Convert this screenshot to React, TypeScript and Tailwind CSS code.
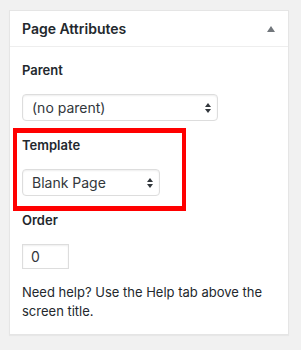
import React from "react";

const font = { fontFamily: "Inter, 'Liberation Sans', Arial, sans-serif" };

function Arrows() {
  return (
    <svg width="6" height="10" viewBox="0 0 6 10" className="shrink-0">
      <polygon points="3,0 6,4 0,4" fill="#32373c" />
      <polygon points="0,6 6,6 3,10" fill="#32373c" />
    </svg>
  );
}

function Select({ label, w }: { label: string; w: string }) {
  return (
    <div
      className={`${w} h-[27px] flex items-center justify-between pl-[9px] pr-[6px] border border-[#dddddd] rounded-[4px] bg-white shadow-[inset_0_1px_2px_rgba(0,0,0,0.07)] text-[14px] text-[#32373c]`}
    >
      <span>{label}</span>
      <Arrows />
    </div>
  );
}

export default function App() {
  return (
    <div className="min-h-[350px] w-[301px] bg-[#f1f1f1] pt-[10px] pl-[9px]" style={font}>
      <div className="w-[280px] bg-white border border-[#e5e5e5] shadow-[0_1px_1px_rgba(0,0,0,0.04)] text-[#23282d]">
        <div className="h-[36px] border-b border-[#eeeeee] flex items-center justify-between pl-[12px] pr-[13px]">
          <span className="text-[14px] font-semibold leading-none">Page Attributes</span>
          <svg width="8" height="6" viewBox="0 0 8 6">
            <polygon points="4,0 8,6 0,6" fill="#72777c" />
          </svg>
        </div>
        <div className="pl-[12px] pt-[14px] pb-[13px]">
          <div className="text-[13px] font-semibold leading-[18px]">Parent</div>
          <div className="mt-[15px]">
            <Select label="(no parent)" w="w-[196px]" />
          </div>
          <div className="mt-[7px] -ml-[9px] w-[173px] border-x-4 border-y-[5px] border-[#ff0000] pl-[5px] pt-[3px] pb-[10px]">
            <div className="text-[13px] font-semibold leading-[18px]">Template</div>
            <div className="mt-[15px]">
              <Select label="Blank Page" w="w-[138px]" />
            </div>
          </div>
          <div className="text-[13px] font-semibold leading-[18px]">Order</div>
          <div className="mt-[15px] w-[47px] h-[25px] border border-[#dddddd] shadow-[inset_0_1px_2px_rgba(0,0,0,0.07)] flex items-center pl-[8px] text-[14px] text-[#32373c]">
            0
          </div>
          <p className="mt-[14px] text-[13px] leading-[19px] pr-[12px]">
            Need help? Use the Help tab above the screen title.
          </p>
        </div>
      </div>
    </div>
  );
}
